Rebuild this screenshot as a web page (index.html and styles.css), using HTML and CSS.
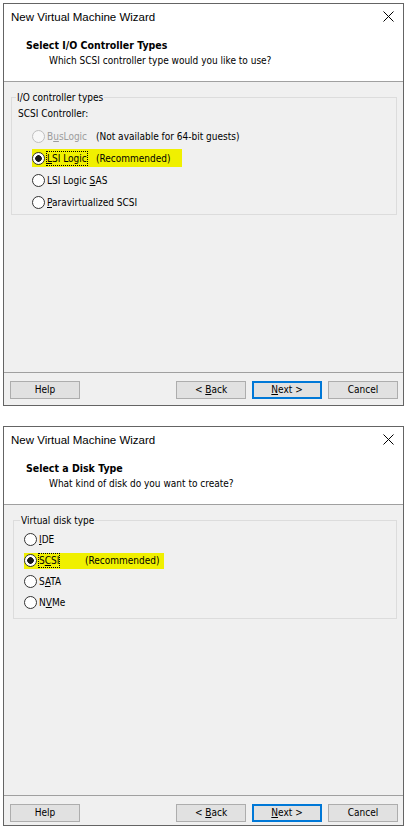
FILE: index.html
```html
<!DOCTYPE html>
<html>
<head>
<meta charset="utf-8">
<link rel="stylesheet" href="styles.css">
</head>
<body>
<div class="dialog">
  <div class="head">
    <div class="titlebar">
      <span class="wtitle">New Virtual Machine Wizard</span>
      <svg class="close" width="11" height="11" viewBox="0 0 11 11"><path d="M0.5 0.5 L10.5 10.5 M10.5 0.5 L0.5 10.5" stroke="#000" stroke-width="1" fill="none"/></svg>
    </div>
    <div class="heading">
      <div class="h-title">Select I/O Controller Types</div>
      <div class="h-sub">Which SCSI controller type would you like to use?</div>
    </div>
  </div>
  <div class="body">
    <fieldset class="group g1">
      <legend>I/O controller types</legend>
      <div class="ginner">
        <div class="caption">SCSI Controller:</div>
        <div class="radios">
          <div class="row disabled"><span class="item"><span class="radio"></span><span class="lw"><span class="lbl">B<u>u</u>sLogic</span></span><span class="note">(Not available for 64-bit guests)</span></span></div>
          <div class="row"><span class="item mark"><span class="radio checked"></span><span class="lw"><span class="lbl focus"><u>L</u>SI Logic</span></span><span class="note">(Recommended)</span></span></div>
          <div class="row"><span class="item"><span class="radio"></span><span class="lw"><span class="lbl">LSI Logic <u>S</u>AS</span></span></span></div>
          <div class="row"><span class="item"><span class="radio"></span><span class="lw"><span class="lbl"><u>P</u>aravirtualized SCSI</span></span></span></div>
        </div>
      </div>
    </fieldset>
  </div>
  <div class="foot">
    <button class="btn">Help</button>
    <div class="btns">
      <button class="btn">&lt; <u>B</u>ack</button>
      <button class="btn default"><u>N</u>ext &gt;</button>
      <button class="btn">Cancel</button>
    </div>
  </div>
</div>

<div class="dialog d2">
  <div class="head">
    <div class="titlebar">
      <span class="wtitle">New Virtual Machine Wizard</span>
      <svg class="close" width="11" height="11" viewBox="0 0 11 11"><path d="M0.5 0.5 L10.5 10.5 M10.5 0.5 L0.5 10.5" stroke="#000" stroke-width="1" fill="none"/></svg>
    </div>
    <div class="heading">
      <div class="h-title">Select a Disk Type</div>
      <div class="h-sub">What kind of disk do you want to create?</div>
    </div>
  </div>
  <div class="body">
    <fieldset class="group g2">
      <legend>Virtual disk type</legend>
      <div class="ginner">
        <div class="radios">
          <div class="row"><span class="item"><span class="radio"></span><span class="lw"><span class="lbl"><u>I</u>DE</span></span></span></div>
          <div class="row"><span class="item mark"><span class="radio checked"></span><span class="lw"><span class="lbl focus">S<u>C</u>SI</span></span><span class="note">(Recommended)</span></span></div>
          <div class="row"><span class="item"><span class="radio"></span><span class="lw"><span class="lbl">S<u>A</u>TA</span></span></span></div>
          <div class="row"><span class="item"><span class="radio"></span><span class="lw"><span class="lbl">N<u>V</u>Me</span></span></span></div>
        </div>
      </div>
    </fieldset>
  </div>
  <div class="foot">
    <button class="btn">Help</button>
    <div class="btns">
      <button class="btn">&lt; <u>B</u>ack</button>
      <button class="btn default"><u>N</u>ext &gt;</button>
      <button class="btn">Cancel</button>
    </div>
  </div>
</div>
</body>
</html>
```
FILE: styles.css
```css
html, body {
  margin: 0;
  background: #fff;
}
body {
  padding-top: 3px;
  font-family: "DejaVu Sans Condensed", "DejaVu Sans", sans-serif;
  font-stretch: condensed;
  font-size: 10px;
  color: #000;
}
.dialog {
  width: 401px;
  margin-left: 3px;
  border: 1px solid #646464;
  box-sizing: border-box;
  background: #f0f0f0;
}
.d2 {
  margin-top: 20px;
}
.head {
  background: #fff;
  height: 77px;
  border-bottom: 1px solid #a0a0a0;
}
.titlebar {
  height: 28px;
  box-sizing: border-box;
  padding: 0 9px 2px 7px;
  display: flex;
  align-items: center;
  justify-content: space-between;
}
.wtitle {
  font-family: "Liberation Sans", Arial, sans-serif;
  font-stretch: normal;
  font-size: 11.5px;
  color: #000;
}
.close {
  display: block;
  margin-bottom: 1px;
}
.heading {
  padding: 6px 0 0 22px;
}
.h-title {
  font-weight: bold;
  font-size: 10.5px;
  line-height: 15px;
}
.h-sub {
  line-height: 15px;
  padding-left: 23px;
}
.body {
  height: 282px;
  padding-top: 8px;
  border-bottom: 1px solid #a0a0a0;
}
.group {
  margin: 0 6px 0 7px;
  padding: 0;
  border: 1px solid #dcdcdc;
  min-width: 0;
}
.group legend {
  margin-left: 4px;
  padding: 0 1px;
  line-height: 15px;
}
.g1 .ginner {
  padding: 0 0 1px 6px;
}
.caption {
  margin-top: 1px;
  line-height: 15px;
}
.g1 .radios {
  margin-top: 4px;
}
.g1 .row {
  height: 22px;
  padding-left: 14px;
}
.row {
  display: flex;
  align-items: center;
}
.item {
  display: inline-flex;
  align-items: center;
  height: 18px;
}
.g1 .mark {
  background: #f0f000;
  width: 150px;
}
.radio {
  flex: none;
  width: 13px;
  height: 13px;
  box-sizing: border-box;
  border: 1px solid #333;
  border-radius: 50%;
  background: #fff;
}
.radio.checked {
  background: radial-gradient(circle, #1a1a1a 0, #1a1a1a 3px, #fff 3.6px);
}
.disabled .radio {
  border-color: #bfbfbf;
  background: #f7f7f7;
}
.disabled .lbl {
  color: #9c9c9c;
}
.lw {
  margin-left: 1px;
  min-width: 50px;
  display: inline-flex;
}
.lbl {
  border: 1px solid transparent;
  line-height: 13px;
  white-space: nowrap;
}
.lbl.focus {
  border: 1px dotted #000;
}
.note {
  white-space: nowrap;
}
.g2 {
  margin-left: 9px;
}
.g2 legend {
  margin-left: 6px;
}
.g2 .ginner {
  padding: 0 0 5px 10px;
}
.g2 .radios {
  margin-top: 1px;
}
.g2 .row {
  height: 21px;
}
.g2 .item {
  height: 16px;
}
.g2 .lw {
  min-width: 47px;
}
.g2 .mark {
  background: #f0f000;
  width: 140px;
}
.foot {
  height: 32px;
  box-sizing: border-box;
  padding: 8px 5px 0 6px;
  display: flex;
  align-items: flex-start;
  justify-content: space-between;
}
.d2 .foot {
  height: 29px;
}
.btns {
  display: flex;
  gap: 6px;
}
.btn {
  width: 70px;
  height: 18px;
  box-sizing: border-box;
  margin: 0;
  padding: 0;
  border: 1px solid #adadad;
  background: #e1e1e1;
  font-family: inherit;
  font-stretch: condensed;
  font-size: 10px;
  color: #000;
  line-height: 14px;
}
.btn.default {
  border: 2px solid #0078d7;
}
```
